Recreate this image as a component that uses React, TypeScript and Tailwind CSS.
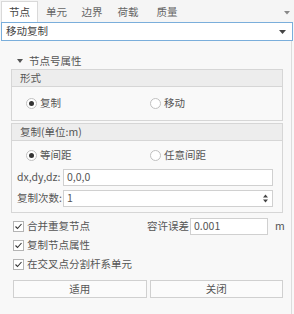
import React from "react";

const font = { fontFamily: '"Noto Sans CJK SC", "Liberation Sans", sans-serif' };

const Radio: React.FC<{ checked?: boolean; label: string }> = ({ checked, label }) => (
  <div className="flex items-center gap-[3px] whitespace-nowrap">
    <span className="w-[11px] h-[11px] rounded-full border border-[#c0c0c0] bg-white flex items-center justify-center">
      {checked && <span className="w-[5px] h-[5px] rounded-full bg-[#333]" />}
    </span>
    <span>{label}</span>
  </div>
);

const Check: React.FC<{ label: string }> = ({ label }) => (
  <div className="flex items-center gap-[3px] whitespace-nowrap">
    <span className="w-[11px] h-[11px] border border-[#b4b4b4] bg-white flex items-center justify-center">
      <svg width="9" height="9" viewBox="0 0 9 9">
        <path d="M1.5 4.5 L3.5 6.5 L7.5 2" fill="none" stroke="#333" strokeWidth="1.1" />
      </svg>
    </span>
    <span>{label}</span>
  </div>
);

export default function App() {
  const tabs = [
    { t: "节点", w: "w-[37px]" },
    { t: "单元", w: "w-[37px]" },
    { t: "边界", w: "w-[34px]" },
    { t: "荷载", w: "w-[38px]" },
    { t: "质量", w: "w-[40px]" },
  ];
  return (
    <div className="w-[294px] h-[314px] bg-[#f8f8f8] text-[10.5px] text-[#555] leading-none overflow-hidden" style={font}>
      <div className="flex h-[22px] items-end pl-[1px] bg-[#f5f5f5] relative">
        {tabs.map((tab, i) => (
          <div
            key={tab.t}
            className={
              (i === 0
                ? "h-[21px] bg-white border border-b-0 border-[#d9d9d9] text-[#444] "
                : "h-[20px] text-[#666] ") +
              tab.w +
              " flex items-center justify-center shrink-0"
            }
          >
            {tab.t}
          </div>
        ))}
        <div className="absolute right-[4px] top-[11px]">
          <svg width="6" height="4" viewBox="0 0 6 4">
            <path d="M0 0 L6 0 L3 3.5 Z" fill="#888" />
          </svg>
        </div>
      </div>
      <div className="mx-[1px] h-[19px] border border-[#7aaedb] bg-white flex items-center justify-between pl-[4px] pr-[6px] text-[#444]">
        <span>移动复制</span>
        <svg width="7" height="4" viewBox="0 0 7 4">
          <path d="M0 0 L7 0 L3.5 4 Z" fill="#444" />
        </svg>
      </div>
      <div className="mr-[2px] border-r border-[#dcdcdc] h-[273px] pt-[13px]">
        <div className="flex items-center pl-[17px] gap-[6px] h-[14px]">
          <svg width="6" height="4" viewBox="0 0 6 4">
            <path d="M0 0 L6 0 L3 4 Z" fill="#555" />
          </svg>
          <span>节点号属性</span>
        </div>
        <div className="ml-[11px] mr-[8px] mt-[1px] border border-[#d6d6d6]">
          <div className="h-[17px] bg-[#ededed] border-b border-[#d6d6d6] flex items-center pl-[8px]">形式</div>
          <div className="h-[33px] bg-[#f9f9f9] flex items-center pl-[14px]">
            <div className="w-[124px] shrink-0">
              <Radio checked label="复制" />
            </div>
            <Radio label="移动" />
          </div>
        </div>
        <div className="ml-[11px] mr-[8px] mt-[2px] border border-[#d6d6d6]">
          <div className="h-[17px] bg-[#ededed] border-b border-[#d6d6d6] flex items-center pl-[8px]">复制(单位:m)</div>
          <div className="bg-[#f9f9f9] pb-[5px]">
            <div className="h-[28px] flex items-center pl-[14px]">
              <div className="w-[124px] shrink-0">
                <Radio checked label="等间距" />
              </div>
              <Radio label="任意间距" />
            </div>
            <div className="flex items-center pl-[5px] pr-[9px] h-[17px]">
              <span className="w-[46px] shrink-0 whitespace-nowrap">dx,dy,dz:</span>
              <div className="flex-1 h-[17px] border border-[#d0d0d0] bg-white flex items-center pl-[3px]">0,0,0</div>
            </div>
            <div className="flex items-center pl-[5px] pr-[9px] h-[17px] mt-[4px]">
              <span className="w-[46px] shrink-0 whitespace-nowrap">复制次数:</span>
              <div className="flex-1 h-[17px] border border-[#d0d0d0] bg-white flex items-center pl-[3px] justify-between pr-[4px]">
                <span>1</span>
                <svg width="5" height="9" viewBox="0 0 5 9">
                  <path d="M0 3.5 L5 3.5 L2.5 0.5 Z M0 5.5 L5 5.5 L2.5 8.5 Z" fill="#444" />
                </svg>
              </div>
            </div>
          </div>
        </div>
        <div className="flex items-center pl-[13px] mt-[5px] h-[17px]">
          <div className="w-[134px] shrink-0">
            <Check label="合并重复节点" />
          </div>
          <span className="w-[43px] shrink-0 whitespace-nowrap">容许误差</span>
          <div className="w-[78px] shrink-0 h-[17px] border border-[#d0d0d0] bg-white flex items-center pl-[3px]">0.001</div>
          <span className="ml-[7px]">m</span>
        </div>
        <div className="pl-[13px] mt-[2px] h-[16px] flex items-center">
          <Check label="复制节点属性" />
        </div>
        <div className="pl-[13px] mt-[3px] h-[16px] flex items-center">
          <Check label="在交叉点分割杆系单元" />
        </div>
        <div className="flex gap-[3px] pl-[13px] pr-[8px] mt-[8px]">
          <div className="flex-1 h-[18px] border border-[#d0d0d0] bg-[#fbfbfb] flex items-center justify-center">适用</div>
          <div className="flex-1 h-[18px] border border-[#d0d0d0] bg-[#fbfbfb] flex items-center justify-center">关闭</div>
        </div>
      </div>
    </div>
  );
}
